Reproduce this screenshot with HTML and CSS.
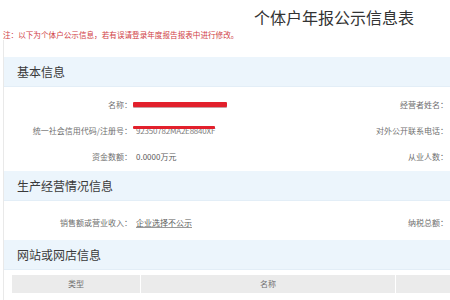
FILE: index.html
```html
<!DOCTYPE html>
<html lang="zh-CN">
<head>
<meta charset="utf-8">
<title>个体户年报公示信息表</title>
<link rel="stylesheet" href="styles.css">
</head>
<body>
<h1 class="title">个体户年报公示信息表</h1>
<p class="note">注：以下为个体户公示信息，若有误请登录年度报告报表中进行修改。</p>
<div class="panel">
  <div class="band">基本信息</div>
  <div class="rows rows-basic">
    <div class="row">
      <span class="label">名称：</span>
      <span class="value"><span class="redact-bar"></span></span>
      <span class="label-right">经营者姓名：</span>
    </div>
    <div class="row">
      <span class="label">统一社会信用代码/注册号：</span>
      <span class="value"><span class="redact-text">92350782MA2E8840XF<span class="strike"></span></span></span>
      <span class="label-right">对外公开联系电话：</span>
    </div>
    <div class="row">
      <span class="label">资金数额：</span>
      <span class="value"><span class="text">0.0000万元</span></span>
      <span class="label-right">从业人数：</span>
    </div>
  </div>
  <div class="band">生产经营情况信息</div>
  <div class="rows rows-prod">
    <div class="row">
      <span class="label">销售额或营业收入：</span>
      <span class="value"><span class="text link">企业选择不公示</span></span>
      <span class="label-right">纳税总额：</span>
    </div>
  </div>
  <div class="band">网站或网店信息</div>
  <div class="table-head">
    <div class="th">类型</div>
    <div class="th">名称</div>
    <div class="th"></div>
  </div>
</div>
</body>
</html>
```
FILE: styles.css
```css
html, body {
  margin: 0;
  padding: 0;
  background: #ffffff;
  font-family: "Noto Sans CJK SC", "Noto Sans", sans-serif;
  width: 450px;
  height: 300px;
  overflow: hidden;
}

.title {
  margin: 0;
  height: 30px;
  padding: 8px 0 0 254px;
  box-sizing: border-box;
  font-size: 16px;
  line-height: 18px;
  font-weight: normal;
  color: #333333;
  white-space: nowrap;
}

.note {
  margin: 0 0 0 3px;
  height: 10px;
  font-size: 7.6px;
  line-height: 10px;
  color: #d04045;
  white-space: nowrap;
}

.panel {
  margin-left: 3px;
  border-left: 1px solid #e9e9e9;
  padding-top: 17px;
  height: 243px;
}

.band {
  height: 30px;
  line-height: 30px;
  padding-left: 13px;
  background: #ecf5fc;
  border-bottom: 1px solid #e3eef7;
  box-sizing: border-box;
  font-size: 12px;
  color: #3a3a3a;
  white-space: nowrap;
}

.rows-basic {
  padding: 4px 0 2px;
}

.rows-prod {
  padding: 8px 0 5px;
}

.row {
  display: grid;
  grid-template-columns: 128px 1fr auto;
  height: 26px;
  align-items: center;
  font-size: 8px;
  color: #707070;
  white-space: nowrap;
}

.label {
  text-align: right;
}

.label-right {
  text-align: right;
  padding-right: 2px;
}

.value {
  display: flex;
  align-items: center;
}

.text {
  margin-left: 4px;
  color: #5a5a5a;
}

.link {
  text-decoration: underline;
  text-decoration-color: #999999;
}

.redact-bar {
  display: inline-block;
  margin-left: 1px;
  width: 94px;
  height: 5px;
  background: #e2202c;
  border-radius: 1px;
  box-shadow: 0 1px 0 #c9a0a4;
}

.redact-text {
  position: relative;
  margin-left: 4px;
  color: #808080;
  font-size: 8px;
  letter-spacing: -0.2px;
}

.strike {
  position: absolute;
  left: -3px;
  right: 0;
  top: 1px;
  height: 3px;
  background: #e2202c;
  border-radius: 1px;
}

.table-head {
  display: grid;
  grid-template-columns: 128px 254px 1fr;
  gap: 1px;
  margin: 5px 0 0 8px;
  height: 18px;
}

.th {
  background: #ebebeb;
  font-size: 8px;
  line-height: 18px;
  color: #707070;
  text-align: center;
}
```
